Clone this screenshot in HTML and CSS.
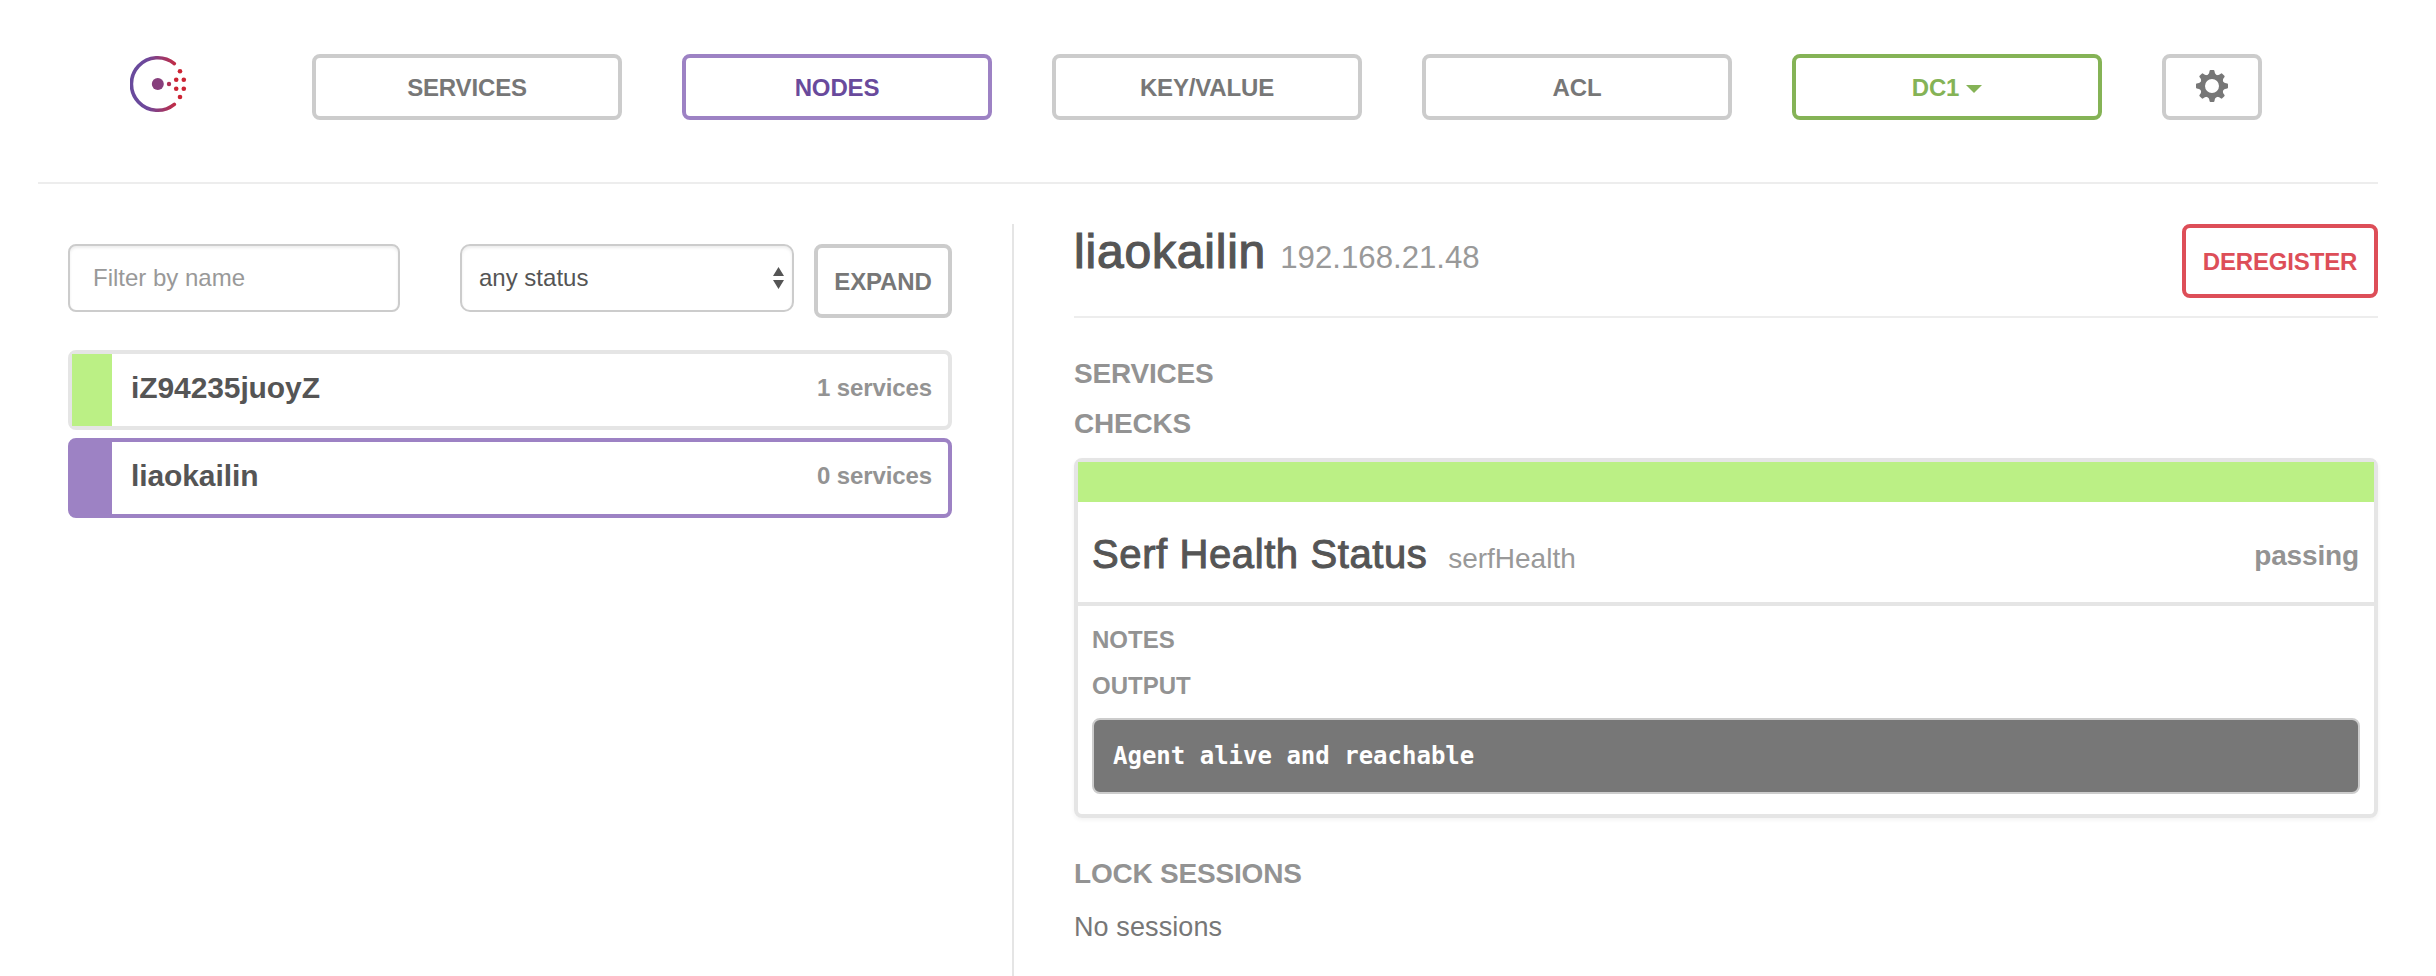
FILE: index.html
```
<!DOCTYPE html>
<html lang="en">
<head>
<meta charset="utf-8">
<title>Consul</title>
<link rel="stylesheet" href="styles.css">
</head>
<body>
<div class="page">
  <header class="topbar">
    <svg class="logo" viewBox="0 0 60 60" width="60" height="60">
      <defs>
        <linearGradient id="brand" gradientUnits="userSpaceOnUse" x1="8" y1="0" x2="47" y2="0">
          <stop offset="0" stop-color="#694a9c"/>
          <stop offset=".25" stop-color="#6f479a"/>
          <stop offset="1" stop-color="#c62a40"/>
        </linearGradient>
      </defs>
      <path d="M44.3 9.6A26.3 26.3 0 1 0 44.3 50.4" fill="none" stroke="url(#brand)" stroke-width="3.6" stroke-linecap="round"/>
      <circle cx="27.8" cy="30" r="6" fill="#873f7c"/>
      <circle cx="39" cy="30" r="2.2" fill="#b02f55"/>
      <g fill="#cc2433">
        <circle cx="46.2" cy="25.8" r="2.3"/><circle cx="53.8" cy="25.8" r="2.3"/>
        <circle cx="46.2" cy="34.7" r="2.3"/><circle cx="53.8" cy="34.7" r="2.3"/>
        <circle cx="50" cy="17.2" r="2.3"/><circle cx="50" cy="43" r="2.3"/>
      </g>
    </svg>
    <nav class="nav">
      <a class="btn nav-btn">SERVICES</a>
      <a class="btn nav-btn active">NODES</a>
      <a class="btn nav-btn">KEY/VALUE</a>
      <a class="btn nav-btn">ACL</a>
      <a class="btn nav-btn dc">DC1<span class="caret"></span></a>
      <a class="btn nav-btn settings">
        <svg viewBox="-16 -16 32 32" width="32" height="32">
          <defs><path id="tooth" d="M-5 -10.5Q-3.3 -11.6 -2.9 -13L-2.4 -15.3Q-2.2 -16 -1.5 -16H1.5Q2.2 -16 2.4 -15.3L2.9 -13Q3.3 -11.6 5 -10.5Z"/></defs>
          <g fill="#777">
            <use href="#tooth"/><use href="#tooth" transform="rotate(45)"/><use href="#tooth" transform="rotate(90)"/><use href="#tooth" transform="rotate(135)"/>
            <use href="#tooth" transform="rotate(180)"/><use href="#tooth" transform="rotate(225)"/><use href="#tooth" transform="rotate(270)"/><use href="#tooth" transform="rotate(315)"/>
          </g>
          <circle r="9.5" fill="none" stroke="#777" stroke-width="5"/>
        </svg>
      </a>
    </nav>
  </header>
  <main class="columns">
    <section class="list">
      <div class="filters">
        <input class="field name-filter" type="text" placeholder="Filter by name">
        <div class="field status">
          <span>any status</span>
          <svg viewBox="0 0 11 22" width="11" height="22" fill="#555"><path d="M5.5 0L11 9H0ZM5.5 22L11 13H0Z"/></svg>
        </div>
        <button class="btn action">EXPAND</button>
      </div>
      <div class="node">
        <div class="node-bar"></div>
        <span class="node-name">iZ94235juoyZ</span>
        <span class="node-count">1 services</span>
      </div>
      <div class="node selected">
        <div class="node-bar"></div>
        <span class="node-name">liaokailin</span>
        <span class="node-count">0 services</span>
      </div>
    </section>
    <section class="detail">
      <div class="detail-head">
        <h1 class="title">liaokailin <small class="ip">192.168.21.48</small></h1>
        <button class="btn action danger">DEREGISTER</button>
      </div>
      <h5 class="section">SERVICES</h5>
      <h5 class="section">CHECKS</h5>
      <article class="card">
        <div class="card-bar"></div>
        <div class="card-head">
          <h3 class="check">Serf Health Status <small class="check-id">serfHealth</small></h3>
          <span class="result">passing</span>
        </div>
        <div class="card-body">
          <h6 class="label">NOTES</h6>
          <h6 class="label">OUTPUT</h6>
          <pre class="output">Agent alive and reachable</pre>
        </div>
      </article>
      <h5 class="section locks">LOCK SESSIONS</h5>
      <p class="empty">No sessions</p>
    </section>
  </main>
</div>
</body>
</html>
```

FILE: styles.css
```
* { box-sizing: border-box; }

body {
  margin: 0;
  background: #fff;
  color: #555;
  font-family: "Liberation Sans", Arial, sans-serif;
}

h1, h3, h5, h6, p, pre { margin: 0; }

.page {
  display: flex;
  flex-direction: column;
  height: 976px;
  padding: 0 58px 0 38px;
  overflow: hidden;
}

.topbar {
  display: flex;
  align-items: flex-start;
  height: 184px;
  padding: 54px 0 0 92px;
  border-bottom: 2px solid #ededed;
}

.logo { flex: none; }

.nav {
  display: flex;
  gap: 60px;
  margin-left: 122px;
}

.btn {
  display: flex;
  align-items: center;
  justify-content: center;
  border: 4px solid #ccc;
  border-radius: 8px;
  background: #fff;
  color: #777;
  font-family: inherit;
  font-size: 24px;
  font-weight: bold;
  line-height: 28px;
  letter-spacing: -.15px;
}

.nav-btn {
  width: 310px;
  height: 66px;
  padding-top: 1px;
}

.nav-btn.active { border-color: #9d82c4; color: #694a9c; }
.nav-btn.dc { border-color: #85b356; color: #85b356; }

.nav-btn.settings {
  width: 100px;
  padding: 0 0 2px;
}

.caret {
  margin: 3px 0 0 7px;
  border: 8px solid transparent;
  border-top-color: currentColor;
  border-bottom: 0;
}

.columns {
  display: flex;
  flex: 1;
  padding-top: 40px;
}

.list {
  flex: none;
  width: 976px;
  padding: 20px 60px 0 30px;
  border-right: 2px solid #e5e5e5;
}

.filters {
  display: flex;
  align-items: flex-start;
  margin-bottom: 32px;
}

.field {
  height: 68px;
  border: 2px solid #ccc;
  border-radius: 8px;
  background: #fff;
  box-shadow: inset 0 2px 3px rgba(0, 0, 0, .075);
  color: #555;
  font: 24px "Liberation Sans", Arial, sans-serif;
}

.name-filter {
  width: 332px;
  padding: 0 23px;
}

.name-filter::placeholder { color: #999; opacity: 1; }

.status {
  display: flex;
  align-items: center;
  justify-content: space-between;
  width: 334px;
  margin: 0 20px 0 60px;
  padding: 0 8px 0 17px;
  border-radius: 10px;
}

.action {
  height: 74px;
  padding: 1px 0 0;
  width: 138px;
}

.action.danger {
  width: 196px;
  border-color: #dd4e58;
  color: #dd4e58;
}

.node {
  display: flex;
  align-items: center;
  height: 80px;
  margin-bottom: 8px;
  padding-right: 16px;
  border: 4px solid #e5e5e5;
  border-radius: 8px;
}

.node-bar {
  align-self: stretch;
  width: 40px;
  background: #bbf085;
}

.node.selected { border-color: #9d82c4; }
.selected .node-bar { background: #9d82c4; }

.node-name {
  flex: 1;
  padding: 0 0 4px 19px;
  font-size: 30px;
  font-weight: bold;
  line-height: 36px;
  letter-spacing: -.1px;
}

.node-count {
  padding-bottom: 4px;
  color: #939393;
  font-size: 24px;
  font-weight: bold;
  line-height: 28px;
  letter-spacing: -.1px;
}

.detail {
  flex: 1;
  padding-left: 60px;
}

.detail-head {
  display: flex;
  align-items: flex-start;
  justify-content: space-between;
  height: 94px;
  margin-bottom: 40px;
  border-bottom: 2px solid #ededed;
}

.title {
  font-size: 48px;
  font-weight: normal;
  line-height: 56px;
  letter-spacing: .8px;
  -webkit-text-stroke: 1.2px #555;
}

.ip {
  color: #999;
  font-size: 31.2px;
  letter-spacing: 0;
  -webkit-text-stroke: 0;
}

.section {
  margin-bottom: 18px;
  color: #939393;
  font-size: 28px;
  font-weight: bold;
  line-height: 32px;
  letter-spacing: -.2px;
}

.card {
  border: 4px solid #e5e5e5;
  border-radius: 8px;
  box-shadow: 0 2px 4px rgba(0, 0, 0, .05);
}

.card-bar {
  height: 40px;
  background: #bbf085;
}

.card-head {
  display: flex;
  align-items: center;
  justify-content: space-between;
  height: 104px;
  padding: 8px 15px 0 14px;
  border-bottom: 4px solid #e5e5e5;
}

.check {
  font-size: 40px;
  font-weight: normal;
  line-height: 48px;
  letter-spacing: .6px;
  -webkit-text-stroke: 1px #555;
}

.check-id {
  margin-left: 9px;
  color: #999;
  font-size: 28px;
  letter-spacing: 0;
  -webkit-text-stroke: 0;
}

.result {
  color: #939393;
  font-size: 28px;
  font-weight: bold;
  line-height: 32px;
  letter-spacing: -.15px;
}

.card-body { padding: 20px 14px; }

.label {
  margin-bottom: 18px;
  color: #939393;
  font-size: 24px;
  font-weight: bold;
  line-height: 28px;
}

.output {
  height: 76px;
  padding: 22px 19px;
  border: 2px solid #ccc;
  border-radius: 8px;
  background: #777;
  color: #fff;
  font: bold 24px/28px "DejaVu Sans Mono", monospace;
}

.locks { margin: 40px 0 21px; }

.empty {
  color: #777;
  font-size: 27px;
  line-height: 32px;
  letter-spacing: .1px;
}
```
